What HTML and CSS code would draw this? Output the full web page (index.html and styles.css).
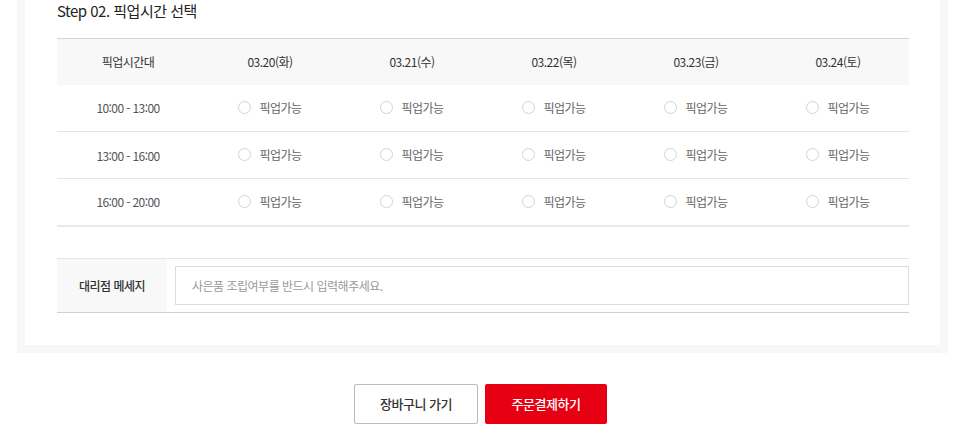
FILE: index.html
```html
<!DOCTYPE html>
<html lang="ko">

<head>
    <meta charset="UTF-8">
    <title>픽업시간 선택</title>
    <link rel="stylesheet" href="styles.css">
</head>

<body>
    <div class="order">
        <div class="step">
            <h2 class="step-tit">Step 02. 픽업시간 선택</h2>
            <table class="pickup">
                <thead>
                    <tr>
                        <th>픽업시간대</th>
                        <th>03.20(화)</th>
                        <th>03.21(수)</th>
                        <th>03.22(목)</th>
                        <th>03.23(금)</th>
                        <th>03.24(토)</th>
                    </tr>
                </thead>
                <tbody>
                    <tr>
                        <td class="time">10:00 - 13:00</td>
                        <td><label class="rdo"><input type="radio" name="pk"><i></i>픽업가능</label></td>
                        <td><label class="rdo"><input type="radio" name="pk"><i></i>픽업가능</label></td>
                        <td><label class="rdo"><input type="radio" name="pk"><i></i>픽업가능</label></td>
                        <td><label class="rdo"><input type="radio" name="pk"><i></i>픽업가능</label></td>
                        <td><label class="rdo"><input type="radio" name="pk"><i></i>픽업가능</label></td>
                    </tr>
                    <tr>
                        <td class="time">13:00 - 16:00</td>
                        <td><label class="rdo"><input type="radio" name="pk"><i></i>픽업가능</label></td>
                        <td><label class="rdo"><input type="radio" name="pk"><i></i>픽업가능</label></td>
                        <td><label class="rdo"><input type="radio" name="pk"><i></i>픽업가능</label></td>
                        <td><label class="rdo"><input type="radio" name="pk"><i></i>픽업가능</label></td>
                        <td><label class="rdo"><input type="radio" name="pk"><i></i>픽업가능</label></td>
                    </tr>
                    <tr>
                        <td class="time">16:00 - 20:00</td>
                        <td><label class="rdo"><input type="radio" name="pk"><i></i>픽업가능</label></td>
                        <td><label class="rdo"><input type="radio" name="pk"><i></i>픽업가능</label></td>
                        <td><label class="rdo"><input type="radio" name="pk"><i></i>픽업가능</label></td>
                        <td><label class="rdo"><input type="radio" name="pk"><i></i>픽업가능</label></td>
                        <td><label class="rdo"><input type="radio" name="pk"><i></i>픽업가능</label></td>
                    </tr>
                </tbody>
            </table>

            <div class="msg">
                <div class="msg-tit">대리점 메세지</div>
                <div class="msg-cont">
                    <input type="text" placeholder="사은품 조립여부를 반드시 입력해주세요.">
                </div>
            </div>
        </div>
    </div>

    <div class="btns">
        <a href="#" class="btn btn-line">장바구니 가기</a>
        <a href="#" class="btn btn-red">주문결제하기</a>
    </div>
</body>

</html>
```

FILE: styles.css
```css
* {
    box-sizing: border-box;
}

body {
    margin: 0;
    font-family: "Noto Sans CJK KR", "Noto Sans", sans-serif;
    color: #333;
    background-color: #fff;
}

.order {
    width: 931px;
    margin-left: 17px;
    border: 8px solid #f7f7f7;
    border-top: 0;
    background-color: #fff;
}

.step {
    padding: 0 31px 32px 32px;
}

.step-tit {
    margin: 0 0 16px;
    font-size: 15px;
    font-weight: 400;
    line-height: 22px;
    color: #222;
    letter-spacing: -0.5px;
}

.pickup {
    width: 100%;
    border-collapse: collapse;
    table-layout: fixed;
    border-top: 1px solid #d5d5d5;
}

.pickup th {
    height: 46px;
    padding: 0;
    background-color: #f8f8f8;
    font-size: 12px;
    font-weight: 400;
    color: #333;
    letter-spacing: -0.5px;
}

.pickup td {
    height: 47px;
    padding: 0;
    border-bottom: 1px solid #e5e5e5;
    text-align: center;
    font-size: 12px;
    color: #666;
    letter-spacing: -0.5px;
}

.pickup tbody tr:last-child td {
    border-bottom: 2px solid #e8e8e8;
}

.pickup .time {
    color: #555;
    letter-spacing: -0.6px;
}

.rdo {
    display: inline-flex;
    align-items: center;
    gap: 8px;
    cursor: pointer;
}

/* 실제 라디오는 숨기고 i로 원을 그림 */
.rdo input {
    display: none;
}

.rdo i {
    display: block;
    width: 13px;
    height: 13px;
    border: 1px solid #d3d3d3;
    border-radius: 50%;
    background-color: #fff;
}

.rdo input:checked + i {
    border: 4px solid #e60012;
}

.msg {
    display: flex;
    margin-top: 31px;
    border-top: 1px solid #e5e5e5;
    border-bottom: 1px solid #d0d0d0;
}

.msg-tit {
    width: 110px;
    display: flex;
    align-items: center;
    justify-content: center;
    background-color: #f8f8f8;
    font-size: 12px;
    font-weight: 500;
    color: #333;
    letter-spacing: -0.5px;
}

.msg-cont {
    flex: 1;
    padding: 7px 0 7px 8px;
}

.msg-cont input {
    display: block;
    width: 100%;
    height: 39px;
    padding: 0 16px;
    border: 1px solid #dcdcdc;
    font-family: inherit;
    font-size: 12px;
    color: #333;
    letter-spacing: -0.5px;
    outline: none;
}

.msg-cont input::placeholder {
    color: #999;
}

.btns {
    display: flex;
    justify-content: center;
    gap: 7px;
    margin-top: 31px;
    padding-right: 5px;
}

.btn {
    display: flex;
    align-items: center;
    justify-content: center;
    height: 40px;
    border-radius: 2px;
    font-size: 13px;
    font-weight: 500;
    text-decoration: none;
    letter-spacing: -0.5px;
}

.btn-line {
    width: 124px;
    border: 1px solid #bbb;
    color: #333;
    background-color: #fff;
}

.btn-red {
    width: 122px;
    background-color: #e60012;
    color: #fff;
}
```
